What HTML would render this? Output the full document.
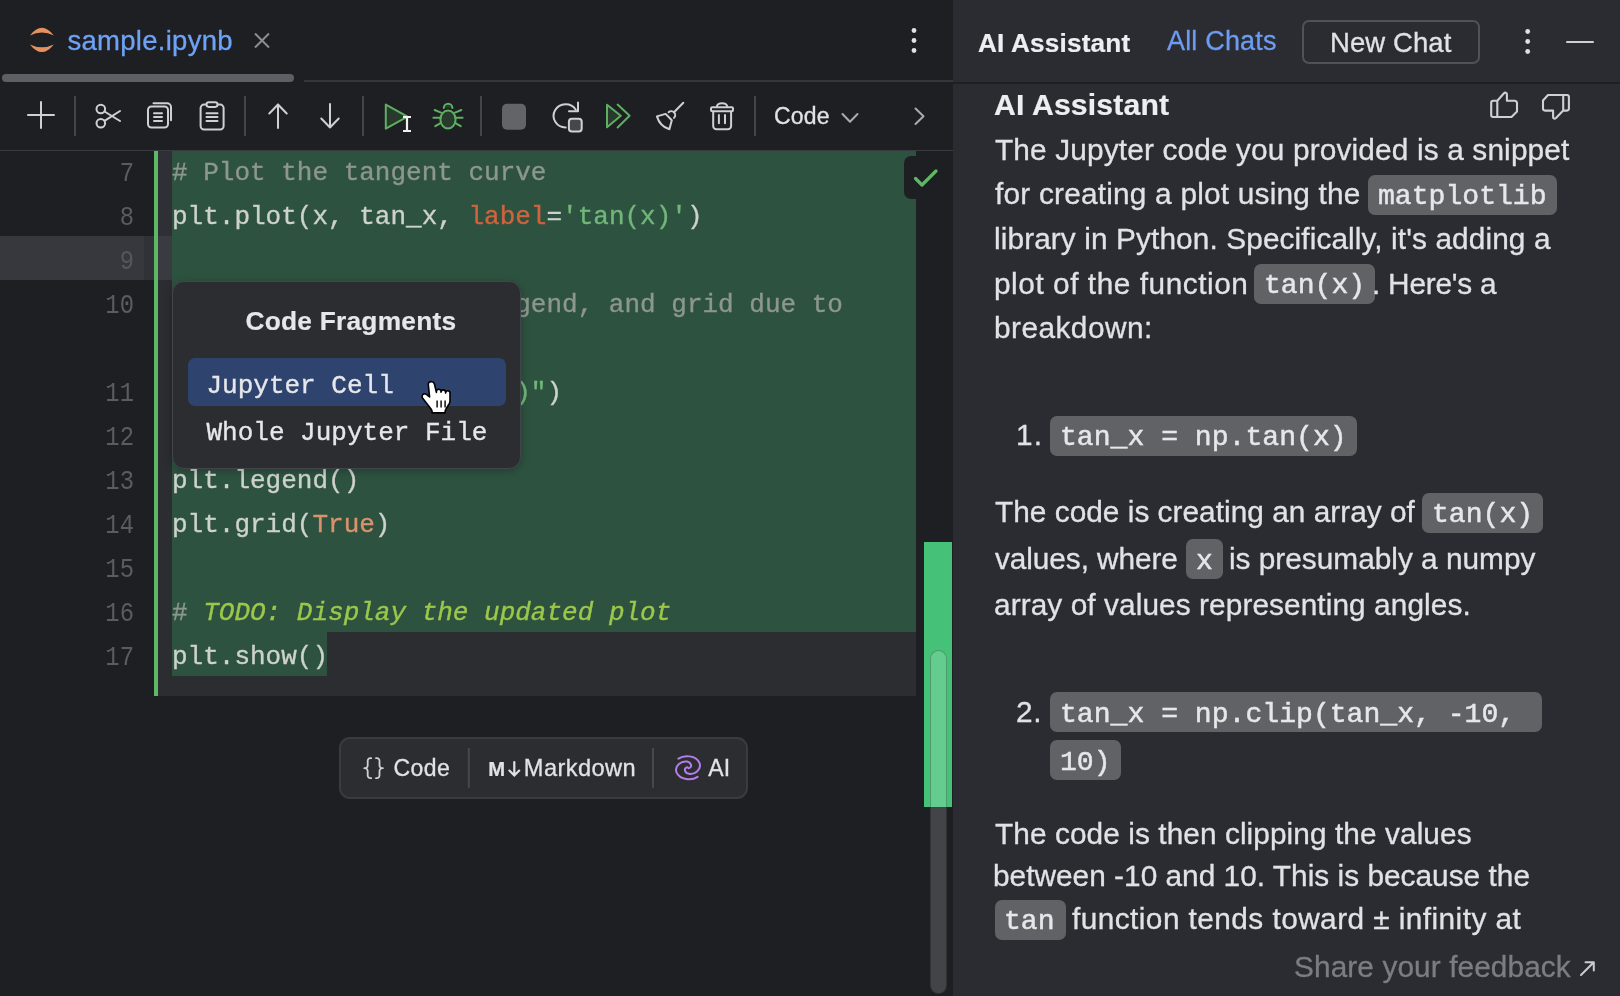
<!DOCTYPE html>
<html><head><meta charset="utf-8">
<style>
*{margin:0;padding:0;box-sizing:border-box}
html,body{width:1620px;height:996px;overflow:hidden;background:#1e1f22}
body{position:relative;font-family:"Liberation Sans",sans-serif;color:#dfe1e5}
.a{position:absolute}
.t{position:absolute;white-space:pre;line-height:1}
body>div,body>svg{will-change:transform}
.m{font-family:"Liberation Mono",monospace}
svg{position:absolute;overflow:visible}
</style></head><body>
<!-- LEFT EDITOR -->
<div class="a" id="left" style="left:0;top:0;width:953px;height:996px;background:#1e1f22">
  <!-- tab bar -->
  <div class="a" style="left:304px;top:80px;width:649px;height:2px;background:#35363b"></div>
  <div class="a" style="left:2px;top:74px;width:292px;height:8px;border-radius:4px;background:#5e5f65"></div>
  <svg style="left:0;top:0" width="60" height="60"><path d="M29.9 35.5Q41.9 20.1 53.8 35.5Q41.9 29.5 29.9 35.5Z M29.9 44.4Q41.9 59.6 53.8 44.4Q41.9 50.2 29.9 44.4Z" fill="#e5915f"/></svg>
  <div class="t" style="left:67.5px;top:26.7px;font-size:27.5px;font-weight:normal;letter-spacing:0.273px;color:#6ea2f6;-webkit-text-stroke:0.3px #6ea2f6">sample.ipynb</div>
  <svg style="left:0;top:0" width="300" height="60"><path d="M255 33.5 L269 47.5 M269 33.5 L255 47.5" stroke="#8b8e94" stroke-width="2"/></svg>
  <svg style="left:0;top:0" width="953" height="60"><circle cx="914" cy="30.5" r="2.4" fill="#dfe1e5"/><circle cx="914" cy="40.5" r="2.4" fill="#dfe1e5"/><circle cx="914" cy="50.5" r="2.4" fill="#dfe1e5"/></svg>

  <!-- toolbar icons -->
  <svg style="left:0;top:0" width="953" height="150" fill="none" stroke="#ced0d6" stroke-width="2" stroke-linecap="round" stroke-linejoin="round">
    <path d="M28 115H54M41 102V128"/>
    <g stroke="#43454a" stroke-width="2" stroke-linecap="butt"><path d="M75 96V136M245 96V136M363 96V136M481 96V136M755 96V136"/></g>
    <circle cx="100.8" cy="109" r="4.3"/><circle cx="100.8" cy="123.3" r="4.3"/>
    <path d="M104.5 111.5L120 121M104.5 120.8L120 111"/>
    <path d="M153.5 103.2h13.5a4 4 0 0 1 4 4v13"/>
    <rect x="148" y="106.5" width="20" height="21" rx="3.5"/>
    <path d="M154 113.2h8M154 117h8M154 121h8"/>
    <rect x="200.6" y="104.6" width="23" height="25" rx="3.5"/>
    <rect x="206.5" y="102.3" width="11" height="4.6" rx="2.3" fill="#1e1f22"/>
    <path d="M206.5 113.2h11M206.5 117h11M206.5 121h11"/>
    <path d="M278 104.5V128M269.3 113.5L278 104.5L286.7 113.5"/>
    <path d="M330 104V127.5M321.3 118.5L330 127.5L338.7 118.5"/>
    <path d="M385.8 104.6L407.5 116.7L385.8 128.6Z" stroke="#5eae63" fill="#283a2b"/>
    <path d="M407 117V131M403 117H411M403 131H411" stroke="#f0f0f0" stroke-width="2.2" stroke-linecap="butt"/>
    <g stroke="#5eae63">
      <path d="M443.8 108a4.3 4.3 0 0 1 8.6 0" fill="#283a2b"/>
      <ellipse cx="448" cy="119.5" rx="7.6" ry="9" fill="#283a2b"/>
      <path d="M434.6 110L441 112.7M433.4 117.8H440.6M435.3 126.2L441 122.8M461.4 110L455 112.7M462.6 117.8H455.4M460.7 126.2L455 122.8"/>
    </g>
    <rect x="502" y="103.8" width="24" height="26" rx="5" fill="#636467" stroke="none"/>
    <path d="M575.8 109.8A12 11.6 0 1 0 565.7 127.5"/>
    <path d="M578 102.5V111.2H569"/>
    <rect x="568.9" y="118.8" width="12.8" height="12.6" rx="3" fill="#46474c"/>
    <g stroke="#5eae63"><path d="M607 104.8L620.8 115.8L607 127.3Z" fill="#283a2b"/><path d="M617.6 104.6L629.6 115.8L617.6 127.5"/></g>
    <path d="M683.3 102.8L674 112.2"/>
    <path d="M668.6 112.3a3.6 3.6 0 0 1 5.4 5.6"/><path d="M656.9 116.4L665.6 113.9L671.8 120.3L669.4 129.3Q660 126.5 656.9 116.4Z"/>
    <path d="M716.9 106.3a5.2 3.6 0 0 1 10.3 0"/><rect x="711" y="107.2" width="22" height="4" rx="1.2"/>
    <path d="M713.2 111.5V126a3.3 3.3 0 0 0 3.3 3.3h11.3a3.3 3.3 0 0 0 3.3 -3.3V111.5M718.9 115V123.3M725 115V123.3"/>
    <path d="M842.5 114L850 121.8L857.5 114" stroke="#a8abb1"/>
    <path d="M915.5 108.5L923.5 116.2L915.5 124" stroke="#a8abb1"/>
  </svg>
  <div class="t" style="left:774.0px;top:104.9px;font-size:23px;font-weight:normal;letter-spacing:0.2px;color:#e1e2e6;-webkit-text-stroke:0.3px #e1e2e6">Code</div>

  <!-- editor -->
  <div class="a" style="left:158px;top:151px;width:758px;height:545px;background:#2b2d30"></div>
  <div class="a" style="left:158px;top:151px;width:14px;height:85px;background:#2f3036"></div>
  <div class="a" style="left:158px;top:236px;width:14px;height:44px;background:#3a3a41"></div>
  <div class="a" style="left:0;top:236px;width:144px;height:44px;background:#37383d"></div>
  <div class="a" style="left:144px;top:236px;width:10px;height:44px;background:#313237"></div>
  <div class="a" style="left:154px;top:151px;width:4px;height:545px;background:#5fb865"></div>
  <div class="a" style="left:172px;top:151px;width:744px;height:481px;background:#2e5240"></div>
  <div class="a" style="left:172px;top:632px;width:155px;height:44px;background:#2e5240"></div>
  <div class="a m" style="left:0;top:152.3px;width:134px;font-size:28.4px;line-height:44px;text-align:right;color:#595c62;white-space:pre;transform:scaleX(0.84);transform-origin:134px 0">7
8
<span style="color:#54575d">9</span>
10

11
12
13
14
15
16
17</div>
  <div class="a m" style="left:172px;top:151.0px;font-size:26px;line-height:44px;color:#cdd2cd;white-space:pre;-webkit-text-stroke:0.35px"><span style="color:#8d968f"># Plot the tangent curve</span>
plt.plot(x, tan_x, <span style="color:#d0643d">label</span>=<span style="color:#72b77a">'tan(x)'</span>)

<span style="color:#8d968f">  Add title, label, legend, and grid due to</span>
<span style="color:#8d968f">  the tan curve</span>
plt.title(<span style="color:#72b77a">"Plot: tan(x)"</span>)
plt.ylabel(<span style="color:#72b77a">"y"</span>)
plt.legend()
plt.grid(<span style="color:#d9936c">True</span>)

<span style="color:#8d968f">#</span><span style="color:#9cc84a;font-style:italic"> TODO: Display the updated plot</span>
plt.show()</div>
  <!-- check box -->
  <div class="a" style="left:904px;top:156px;width:20px;height:43px;border-radius:7px 0 0 7px;background:#1e1f22"></div>
  <svg style="left:0;top:0" width="953" height="200"><path d="M915.5 178.5L922 185L936 171" fill="none" stroke="#5fb865" stroke-width="3.2" stroke-linecap="round" stroke-linejoin="round"/></svg>
  <!-- scrollbar -->
  <div class="a" style="left:924px;top:542px;width:28px;height:265px;background:#45c278"></div>
  <div class="a" style="left:930px;top:650px;width:17px;height:344px;border-radius:8.5px;background:rgba(255,255,255,0.17);border:1.5px solid rgba(0,0,0,0.24)"></div>
  <!-- popup -->
  <div class="a" style="left:172px;top:280.5px;width:349px;height:188px;border-radius:12px;background:#2b2d30;border:1px solid #43454a;box-shadow:0 2px 8px rgba(0,0,0,0.25)"></div>
  <div class="t" style="left:245.4px;top:307.7px;font-size:26.3px;font-weight:bold;letter-spacing:0.246px;color:#e6e7ea;-webkit-text-stroke:0.2px #e6e7ea">Code Fragments</div>
  <div class="a" style="left:188.4px;top:358px;width:317.3px;height:47.7px;border-radius:7px;background:#2e436e"></div>
  <div class="t m" style="left:206.5px;top:372.9px;font-size:26px;color:#e6e7ea;-webkit-text-stroke:0.35px">Jupyter Cell</div>
  <div class="t m" style="left:206.5px;top:420.4px;font-size:26px;color:#e6e7ea;-webkit-text-stroke:0.35px">Whole Jupyter File</div>
  <!-- bottom add toolbar -->
  <div class="a" style="left:338.5px;top:736.5px;width:409px;height:62.5px;border-radius:11px;background:#2b2d30;border:2px solid #393b40"></div>

  <!-- hand cursor -->
  <svg style="left:0;top:0" width="953" height="500"><path d="M431 381.6c-1.7 0-2.9 1.4-2.7 3.1l1.3 12.3-2.9-2.4c-1.5-1.2-3.5-1-4.3 .5c-.6 1-.4 2.3 .3 3.2l8.5 11c.6 .8 .9 1.7 .9 2.6v1h13v-1c0-1 .3-2 .8-2.8l3.5-5.7c.4-.7 .6-1.5 .6-2.3v-8c0-1.3-1-2.3-2.2-2.3s-2.2 1-2.2 2.3v-.9c0-1.3-1-2.3-2.3-2.3s-2.3 1-2.3 2.3v-.6c0-1.3-1-2.3-2.3-2.3s-2.3 1-2.3 2.3v.8l-2-8.4c-.4-1.5-1.2-2.3-2.5-2.3z" fill="#fff" stroke="#000" stroke-width="1.6" stroke-linejoin="round"/><path d="M437.1 400.5V407.5M441.1 400.5V407.5M445.1 400.5V407.5" stroke="#000" stroke-width="1.4"/></svg>
  <!-- add-cell bar contents -->
  <svg style="left:0;top:0" width="953" height="996" fill="none" stroke="#ced0d6" stroke-width="1.8" stroke-linecap="round" stroke-linejoin="round">
    <path d="M371.2 758.2h-.9a2.6 2.6 0 0 0 -2.6 2.6v4.6a2.8 2.8 0 0 1 -2.8 2.8h-.6h.6a2.8 2.8 0 0 1 2.8 2.8v4.6a2.6 2.6 0 0 0 2.6 2.6h.9"/>
    <path d="M376 758.2h.9a2.6 2.6 0 0 1 2.6 2.6v4.6a2.8 2.8 0 0 0 2.8 2.8h.6h-.6a2.8 2.8 0 0 0 -2.8 2.8v4.6a2.6 2.6 0 0 1 -2.6 2.6h-.9"/>
    <path d="M468.8 748V787.7M653 748V787.7" stroke="#46484d" stroke-width="2" stroke-linecap="butt"/>
    <path d="M514.3 762V775.2M509.4 770.6L514.3 775.6L519.2 770.6" stroke="#e1e2e6" stroke-width="2.2"/>
    <g stroke="#b47ee9" stroke-width="2">
      <path d="M678.4 758.6C684 754.8 696 755 699.5 763C702 770 694 774.8 689 773.8C684.5 772.8 683.2 768 687.5 767.2"/>
      <path d="M697.6 776.8C692 780.6 680 780.4 676.5 772.4C674 765.4 682 760.6 687 761.6C691.5 762.6 692.8 767.4 688.5 768.2"/>
    </g>
  </svg>
  <div class="t" style="left:393.5px;top:757.3px;font-size:23px;font-weight:normal;letter-spacing:0.467px;color:#e1e2e6;-webkit-text-stroke:0.3px #e1e2e6">Code</div>
  <div class="t" style="left:488.3px;top:758.6px;font-size:20.3px;font-weight:bold;letter-spacing:0.0px;color:#e1e2e6;-webkit-text-stroke:0.2px #e1e2e6">M</div>
  <div class="t" style="left:523.8px;top:756.8px;font-size:23.6px;font-weight:normal;letter-spacing:0.429px;color:#e1e2e6;-webkit-text-stroke:0.3px #e1e2e6">Markdown</div>
  <div class="t" style="left:708.3px;top:757.3px;font-size:23px;font-weight:normal;letter-spacing:0.2px;color:#e1e2e6;-webkit-text-stroke:0.3px #e1e2e6">AI</div>
  <!-- toolbar line -->
  <div class="a" style="left:0;top:150px;width:953px;height:1px;background:#393b40"></div>
</div>
<div class="a" style="left:953px;top:0;width:667px;height:996px;background:#2b2c31"></div>
<div class="a" style="left:953px;top:82px;width:667px;height:2px;background:#1e1f22"></div>
<div class="t" style="left:977.6px;top:30.3px;font-size:26.2px;font-weight:bold;letter-spacing:0.164px;color:#eceef1;-webkit-text-stroke:0.2px #eceef1">AI Assistant</div>
<div class="t" style="left:1166.5px;top:27.5px;font-size:27px;font-weight:normal;letter-spacing:0.175px;color:#6c9cf4;-webkit-text-stroke:0.3px #6c9cf4">All Chats</div>
<div class="a" style="left:1302px;top:20px;width:177.5px;height:44px;border-radius:7px;border:2px solid #505257"></div>
<div class="t" style="left:1329.7px;top:29.2px;font-size:27.5px;font-weight:normal;letter-spacing:0.086px;color:#e1e2e6;-webkit-text-stroke:0.3px #e1e2e6">New Chat</div>
<svg style="left:0;top:0" width="1620" height="130" fill="none" stroke="#ced0d6" stroke-width="2" stroke-linecap="round" stroke-linejoin="round">
  <circle cx="1527.7" cy="31.5" r="2.4" fill="#dfe1e5" stroke="none"/><circle cx="1527.7" cy="41.5" r="2.4" fill="#dfe1e5" stroke="none"/><circle cx="1527.7" cy="51.5" r="2.4" fill="#dfe1e5" stroke="none"/>
  <path d="M1567 42H1593"/>
</svg>
<div class="t" style="left:993.6px;top:90.4px;font-size:30.2px;font-weight:bold;letter-spacing:0.164px;color:#eceef1;-webkit-text-stroke:0.2px #eceef1">AI Assistant</div>
<div class="t" style="left:994.6px;top:134.8px;font-size:29.8px;font-weight:normal;letter-spacing:0.151px;color:#e1e2e6;-webkit-text-stroke:0.3px #e1e2e6">The Jupyter code you provided is a snippet</div>
<div class="t" style="left:995.0px;top:179.3px;font-size:29.8px;font-weight:normal;letter-spacing:0.214px;color:#e1e2e6;-webkit-text-stroke:0.3px #e1e2e6">for creating a plot using the</div>
<div class="a" style="left:1368.0px;top:174.5px;width:188.6px;height:40px;border-radius:7px;background:#616265"></div>
<div class="t m" style="left:1377.5px;top:183.0px;font-size:28.1px;color:#e6e7ea;-webkit-text-stroke:0.5px #e6e7ea">matplotlib</div>
<div class="t" style="left:994.0px;top:224.0px;font-size:29.8px;font-weight:normal;letter-spacing:0.107px;color:#e1e2e6;-webkit-text-stroke:0.3px #e1e2e6">library in Python. Specifically, it's adding a</div>
<div class="t" style="left:993.5px;top:268.7px;font-size:29.8px;font-weight:normal;letter-spacing:0.547px;color:#e1e2e6;-webkit-text-stroke:0.3px #e1e2e6">plot of the function</div>
<div class="a" style="left:1254.0px;top:263.9px;width:121.2px;height:40px;border-radius:7px;background:#616265"></div>
<div class="t m" style="left:1263.5px;top:272.4px;font-size:28.1px;color:#e6e7ea;-webkit-text-stroke:0.5px #e6e7ea">tan(x)</div>
<div class="t" style="left:1372.4px;top:268.7px;font-size:29.8px;font-weight:normal;letter-spacing:-0.222px;color:#e1e2e6;-webkit-text-stroke:0.3px #e1e2e6">. Here's a</div>
<div class="t" style="left:994.0px;top:313.4px;font-size:29.8px;font-weight:normal;letter-spacing:0.467px;color:#e1e2e6;-webkit-text-stroke:0.3px #e1e2e6">breakdown:</div>
<div class="t" style="left:1016.0px;top:420.3px;font-size:29.8px;font-weight:normal;letter-spacing:1.2px;color:#e1e2e6;-webkit-text-stroke:0.3px #e1e2e6">1.</div>
<div class="a" style="left:1050.4px;top:415.5px;width:306.6px;height:40px;border-radius:7px;background:#616265"></div>
<div class="t m" style="left:1059.9px;top:424.0px;font-size:28.1px;color:#e6e7ea;-webkit-text-stroke:0.5px #e6e7ea">tan_x = np.tan(x)</div>
<div class="t" style="left:994.6px;top:497.4px;font-size:29.8px;font-weight:normal;letter-spacing:0.026px;color:#e1e2e6;-webkit-text-stroke:0.3px #e1e2e6">The code is creating an array of</div>
<div class="a" style="left:1422.4px;top:492.6px;width:121.2px;height:40px;border-radius:7px;background:#616265"></div>
<div class="t m" style="left:1431.9px;top:501.1px;font-size:28.1px;color:#e6e7ea;-webkit-text-stroke:0.5px #e6e7ea">tan(x)</div>
<div class="t" style="left:995.0px;top:544.2px;font-size:29.8px;font-weight:normal;letter-spacing:-0.083px;color:#e1e2e6;-webkit-text-stroke:0.3px #e1e2e6">values, where</div>
<div class="a" style="left:1186.0px;top:539.4px;width:36.9px;height:40px;border-radius:7px;background:#616265"></div>
<div class="t m" style="left:1195.5px;top:547.9px;font-size:28.1px;color:#e6e7ea;-webkit-text-stroke:0.5px #e6e7ea">x</div>
<div class="t" style="left:1229.0px;top:544.2px;font-size:29.8px;font-weight:normal;letter-spacing:0.0px;color:#e1e2e6;-webkit-text-stroke:0.3px #e1e2e6">is presumably a numpy</div>
<div class="t" style="left:994.0px;top:590.3px;font-size:29.8px;font-weight:normal;letter-spacing:0.086px;color:#e1e2e6;-webkit-text-stroke:0.3px #e1e2e6">array of values representing angles.</div>
<div class="t" style="left:1016.3px;top:697.0px;font-size:29.8px;font-weight:normal;letter-spacing:0.8px;color:#e1e2e6;-webkit-text-stroke:0.3px #e1e2e6">2.</div>
<div class="a" style="left:1050.0px;top:692.2px;width:492.1px;height:40px;border-radius:7px;background:#616265"></div>
<div class="t m" style="left:1059.5px;top:700.7px;font-size:28.1px;color:#e6e7ea;-webkit-text-stroke:0.5px #e6e7ea">tan_x = np.clip(tan_x, -10, </div>
<div class="a" style="left:1050.0px;top:740.2px;width:70.6px;height:40px;border-radius:7px;background:#616265"></div>
<div class="t m" style="left:1059.5px;top:748.7px;font-size:28.1px;color:#e6e7ea;-webkit-text-stroke:0.5px #e6e7ea">10)</div>
<div class="t" style="left:994.6px;top:819.2px;font-size:29.8px;font-weight:normal;letter-spacing:0.08px;color:#e1e2e6;-webkit-text-stroke:0.3px #e1e2e6">The code is then clipping the values</div>
<div class="t" style="left:992.6px;top:861.0px;font-size:29.8px;font-weight:normal;letter-spacing:0.021px;color:#e1e2e6;-webkit-text-stroke:0.3px #e1e2e6">between -10 and 10. This is because the</div>
<div class="a" style="left:994.6px;top:899.5px;width:70.6px;height:40px;border-radius:7px;background:#616265"></div>
<div class="t m" style="left:1004.1px;top:908.0px;font-size:28.1px;color:#e6e7ea;-webkit-text-stroke:0.5px #e6e7ea">tan</div>
<div class="t" style="left:1072.0px;top:904.3px;font-size:29.8px;font-weight:normal;letter-spacing:0.441px;color:#e1e2e6;-webkit-text-stroke:0.3px #e1e2e6">function tends toward ± infinity at</div>
<div class="t" style="left:1293.7px;top:952.3px;font-size:29.8px;font-weight:normal;letter-spacing:0.1px;color:#7b7d83;-webkit-text-stroke:0.3px #7b7d83">Share your feedback</div>
<svg style="left:0;top:0" width="1620" height="996" fill="none" stroke="#ced0d6" stroke-width="2.1" stroke-linecap="round" stroke-linejoin="round">
  <path d="M1493.2 100.8H1497.3L1504 93.3a1.6 1.6 0 0 1 2.9 1V100.8H1514.7a2.3 2.3 0 0 1 2.3 2.3V111.5L1511.5 117H1493.2a2 2 0 0 1 -2 -2V102.8a2 2 0 0 1 2 -2zM1497.3 100.8V117"/>
  <path d="M1566.9 110.6H1563.2L1556 118a1.6 1.6 0 0 1 -2.9 -1V110.6H1545a2 2 0 0 1 -2 -2V100.5L1548 95H1566.9a2 2 0 0 1 2 2V108.6a2 2 0 0 1 -2 2zM1563.2 95V110.6"/>
  <path d="M1581 975L1593.8 962.2M1585.5 962.2H1593.8V970.5" stroke="#c9cbcf" stroke-width="2"/>
</svg>
</body></html>
